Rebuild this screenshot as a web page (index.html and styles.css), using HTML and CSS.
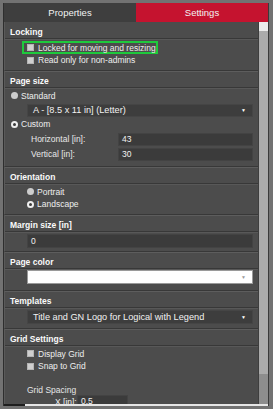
FILE: index.html
```html
<!DOCTYPE html>
<html lang="en">
<head>
  <meta charset="UTF-8" />
  <title>Settings</title>
  <link rel="stylesheet" href="styles.css">
</head>
<body>

  <div class="panel">
    <nav class="tabs">
      <div class="tab">Properties</div>
      <div class="tab active">Settings</div>
    </nav>

    <div class="body">
      <main class="content">

        <section class="group locking">
          <h2 class="group-title">Locking</h2>
          <div class="group-body indent">
            <label class="row highlight"><span class="check"></span>Locked for moving and resizing</label>
            <label class="row"><span class="check"></span>Read only for non-admins</label>
          </div>
        </section>

        <section class="group page-size">
          <h2 class="group-title">Page size</h2>
          <div class="group-body small-indent">
            <label class="row"><span class="radio"></span>Standard</label>
            <div class="select dark sub">A - [8.5 x 11 in] (Letter)<span class="arrow">▼</span></div>
            <label class="row custom"><span class="radio on"></span>Custom</label>
            <div class="field">
              <span class="field-label">Horizontal [in]:</span>
              <span class="input">43</span>
            </div>
            <div class="field">
              <span class="field-label">Vertical [in]:</span>
              <span class="input">30</span>
            </div>
          </div>
        </section>

        <section class="group orientation">
          <h2 class="group-title">Orientation</h2>
          <div class="group-body indent">
            <label class="row"><span class="radio"></span>Portrait</label>
            <label class="row"><span class="radio on"></span>Landscape</label>
          </div>
        </section>

        <section class="group margin">
          <h2 class="group-title">Margin size [in]</h2>
          <div class="group-body indent">
            <div class="input wide">0</div>
          </div>
        </section>

        <section class="group page-color">
          <h2 class="group-title">Page color</h2>
          <div class="group-body indent">
            <div class="select light"><span class="arrow">▼</span></div>
          </div>
        </section>

        <section class="group templates">
          <h2 class="group-title">Templates</h2>
          <div class="group-body indent">
            <div class="select dark">Title and GN Logo for Logical with Legend<span class="arrow">▼</span></div>
          </div>
        </section>

        <section class="group last">
          <h2 class="group-title">Grid Settings</h2>
          <div class="group-body indent">
            <label class="row"><span class="check"></span>Display Grid</label>
            <label class="row"><span class="check"></span>Snap to Grid</label>
            <p class="spacing-title">Grid Spacing</p>
            <div class="spacing-row">
              <span class="spacing-label">X [in]:</span>
              <span class="input spacing-input">0.5</span>
            </div>
          </div>
        </section>

      </main>

      <div class="scrollbar">
        <div class="scroll-btn"></div>
        <div class="scroll-thumb"></div>
        <div class="scroll-track"></div>
      </div>
    </div>

    <div class="bottom-edge">
      <span class="edge-dark"></span>
      <span class="edge-light"></span>
    </div>
  </div>

</body>
</html>
```

FILE: styles.css
```css
body {
  margin: 0;
  background: #727272;
  font-family: 'Liberation Sans', Arial, sans-serif;
  color: #f0f0f0;
}

.panel {
  margin: 3px 4px 0 3px;
  height: 403px;
  display: flex;
  flex-direction: column;
  background: #4c4c4c;
  border-left: 1px solid #2e2e2e;
  border-right: 1px solid #3a3a3a;
  overflow: hidden;
}

/* tabs */
.tabs {
  display: flex;
  height: 19px;
  flex-shrink: 0;
}
.tab {
  flex: 1;
  display: flex;
  align-items: center;
  justify-content: center;
  background: #3e3e3e;
  font-size: 9.5px;
  color: #f2f2f2;
}
.tab.active {
  background: #c5132f;
}

.body {
  flex: 1;
  display: flex;
  min-height: 0;
}
.content {
  flex: 1;
  overflow: hidden;
}

/* groups */
.group {
  border-left: 1px solid #5a5a5a;
  border-bottom: 1px solid #383838;
  box-shadow: 0 1px 0 #5d5d5d;
}
.group.last {
  border-bottom: none;
  box-shadow: none;
}
.group-title {
  margin: 0;
  padding: 4px 0 0 5px;
  height: 12px;
  line-height: 12px;
  font-size: 8.5px;
  font-weight: bold;
  color: #fafafa;
  border-bottom: 1px solid #383838;
  box-shadow: 0 1px 0 #585858;
}
.group-body {
  padding: 2px 5px 2px 0;
}
.indent {
  padding-left: 22px;
}
.small-indent {
  padding-left: 6px;
}
.locking .group-body { padding-bottom: 3px; }
.page-size .group-body { padding-bottom: 5px; }
.orientation .group-body { padding-bottom: 3px; }
.margin .group-body { padding-bottom: 3px; }
.page-color .group-body { padding-top: 1px; padding-bottom: 6px; }
.templates .group-body { padding-bottom: 4px; }

.row {
  display: flex;
  align-items: center;
  height: 12.5px;
  font-size: 8.5px;
  color: #eeeeee;
  white-space: nowrap;
}
.row.custom {
  margin-top: 1px;
}
.highlight {
  margin-left: -5px;
  padding-left: 3px;
  width: 136px;
  height: 13px;
  border: 2px solid #1ec93c;
  box-sizing: border-box;
}

.check {
  flex: none;
  width: 7px;
  height: 7px;
  margin-right: 4px;
  background: #cfcfcf;
  border: 1px solid #b5b5b5;
  box-sizing: border-box;
}
.radio {
  flex: none;
  width: 7px;
  height: 7px;
  margin-right: 3px;
  border-radius: 50%;
  background: #cdcdcd;
}
.radio.on {
  box-sizing: border-box;
  border: 2px solid #f0f0f0;
  background: #3c3c3c;
}

/* selects and inputs */
.select {
  position: relative;
  height: 14px;
  line-height: 12px;
  padding-left: 5px;
  font-size: 9.2px;
  box-sizing: border-box;
  white-space: nowrap;
}
.select.dark {
  background: #3d3d3d;
  border: 1px solid #454545;
  color: #f2f2f2;
}
.select.light {
  background: #ffffff;
  border: 1px solid #9a9a9a;
}
.select.sub {
  height: 13px;
  line-height: 11px;
  margin: 2px 0 0 16px;
}
.arrow {
  position: absolute;
  right: 6px;
  top: 0;
  font-size: 5px;
  color: #ffffff;
}
.select.light .arrow {
  color: #9a9a9a;
}

.field {
  display: flex;
  align-items: center;
  margin: 2px 0 0 20px;
}
.field-label {
  width: 87px;
  font-size: 8.5px;
  color: #e8e8e8;
}
.input {
  flex: 1;
  height: 11px;
  line-height: 11px;
  padding-left: 3px;
  background: #3b3b3b;
  border: 1px solid #434343;
  font-size: 8.5px;
  color: #f2f2f2;
}
.input.wide {
  height: 14px;
  line-height: 12px;
  box-sizing: border-box;
}

.spacing-title {
  margin: 12px 0 0;
  height: 10px;
  line-height: 10px;
  font-size: 8.5px;
  color: #e6e6e6;
}
.spacing-row {
  display: flex;
  align-items: center;
  padding-left: 28px;
}
.spacing-label {
  width: 22px;
  font-size: 8.5px;
}
.spacing-input {
  flex: none;
  width: 46px;
  height: 12px;
}

/* scrollbar */
.scrollbar {
  width: 9px;
  display: flex;
  flex-direction: column;
  border-left: 1px solid #3e3e3e;
}
.scroll-btn {
  height: 9px;
  background: #ececec;
}
.scroll-thumb {
  height: 343px;
  background: #ababab;
}
.scroll-track {
  flex: 1;
  background: #8d8d8d;
}

.bottom-edge {
  display: flex;
  height: 2px;
  flex-shrink: 0;
}
.edge-dark {
  width: 21px;
  background: #1e1e1e;
}
.edge-light {
  flex: 1;
  background: #e6e6e6;
}
```
